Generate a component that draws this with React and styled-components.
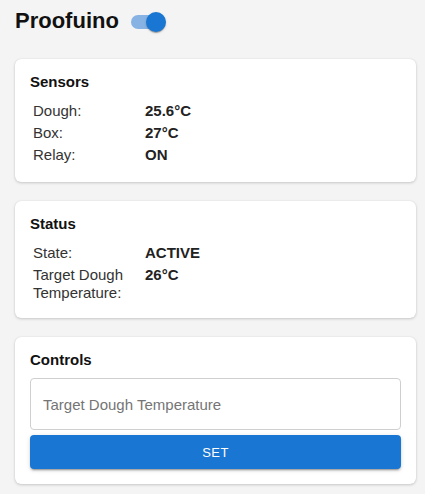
import styled, { createGlobalStyle } from "styled-components";
import { useState, Fragment } from "react";

const GlobalStyle = createGlobalStyle`
    body {
        margin: 0;
        background: #f4f4f4;
        font-family: "Liberation Sans", Arial, sans-serif;
        color: #222;
    }
`
const Page = styled.div`
    width: 401px;
    padding: 8px 0 9px 15px;
`
const Header = styled.header`
    display: flex;
    align-items: center;
    gap: 12px;
    height: 26px;
    margin-bottom: 25px;
`
const Title = styled.h1`
    margin: 0;
    font-size: 22px;
    line-height: 26px;
    font-weight: 700;
    color: #111;
`
const SwitchWrap = styled.button`
    position: relative;
    width: 34px;
    height: 20px;
    padding: 0;
    border: none;
    background: none;
    cursor: pointer;
    margin-top: 2px;
`
const Track = styled.span`
    position: absolute;
    left: 0;
    top: 3px;
    width: 34px;
    height: 14px;
    border-radius: 7px;
    background: ${(p) => (p.$on ? "#86b3e3" : "#bdbdbd")};
`
const Thumb = styled.span`
    position: absolute;
    top: 0;
    left: ${(p) => (p.$on ? "15px" : "-1px")};
    width: 20px;
    height: 20px;
    border-radius: 50%;
    background: ${(p) => (p.$on ? "#1976d2" : "#fafafa")};
    box-shadow: 0 2px 1px -1px rgba(0,0,0,0.2), 0 1px 1px rgba(0,0,0,0.14), 0 1px 3px rgba(0,0,0,0.12);
`
const Cards = styled.div`
    display: flex;
    flex-direction: column;
    gap: 19px;
`
const Card = styled.section`
    background: #fff;
    border-radius: 6px;
    padding: ${(p) => p.$pad || "14px 15px 15px"};
    box-shadow: 0 1px 3px rgba(0,0,0,0.18), 0 0 1px rgba(0,0,0,0.12);
`
const CardTitle = styled.h2`
    margin: 0 0 9px;
    font-size: 15px;
    line-height: 18px;
    font-weight: 700;
    color: #111;
`
const Table = styled.div`
    display: grid;
    grid-template-columns: 112px 1fr;
`
const Label = styled.div`
    padding: 2px 3px;
    font-size: 15px;
    line-height: 18px;
    color: #333;
`
const Value = styled.div`
    padding: 2px 3px;
    font-size: 15px;
    line-height: 18px;
    font-weight: 700;
    color: #222;
`
const Input = styled.input`
    display: block;
    box-sizing: border-box;
    width: 100%;
    height: 52px;
    margin: 0 0 5px;
    padding: 0 12px;
    border: 1px solid #cfcfcf;
    border-radius: 4px;
    font-family: inherit;
    font-size: 15px;
    color: #222;
    &::placeholder {
        color: #757575;
    }
`
const Button = styled.button`
    display: block;
    width: 100%;
    height: 34px;
    border: none;
    border-radius: 4px;
    background: #1976d2;
    color: #fff;
    font-family: inherit;
    font-size: 13px;
    letter-spacing: 0.4px;
    cursor: pointer;
    box-shadow: 0 3px 1px -2px rgba(0,0,0,0.2), 0 2px 2px rgba(0,0,0,0.14), 0 1px 5px rgba(0,0,0,0.12);
`

const InfoCard = ({ title, rows, pad }) => (
    <Card $pad={pad}>
        <CardTitle>{title}</CardTitle>
        <Table>
            {rows.map(([k, v]) => (
                <Fragment key={k}>
                    <Label>{k}</Label>
                    <Value>{v}</Value>
                </Fragment>
            ))}
        </Table>
    </Card>
)

const App = () => {
    const [on, setOn] = useState(true);
    const [target, setTarget] = useState("");

    return (
        <Page>
            <GlobalStyle />
            <Header>
                <Title>Proofuino</Title>
                <SwitchWrap onClick={() => setOn(!on)} aria-label="toggle">
                    <Track $on={on} />
                    <Thumb $on={on} />
                </SwitchWrap>
            </Header>
            <Cards>
                <InfoCard title="Sensors" pad="14px 15px 16px" rows={[["Dough:", "25.6°C"], ["Box:", "27°C"], ["Relay:", "ON"]]} />
                <InfoCard title="Status" pad="14px 15px 14px" rows={[["State:", "ACTIVE"], ["Target Dough Temperature:", "26°C"]]} />
                <Card>
                    <CardTitle>Controls</CardTitle>
                    <Input placeholder="Target Dough Temperature" value={target} onChange={(e) => setTarget(e.target.value)} />
                    <Button>SET</Button>
                </Card>
            </Cards>
        </Page>
    )
}

export default App;
